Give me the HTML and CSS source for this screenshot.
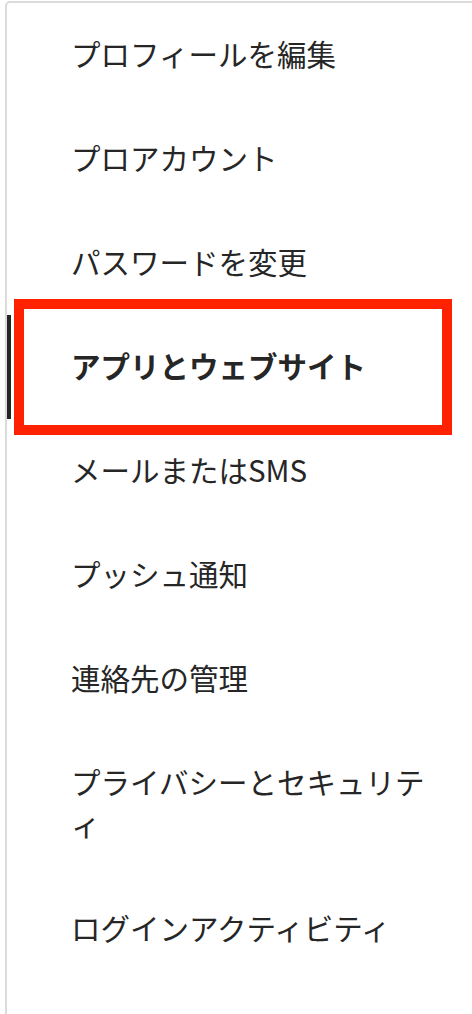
FILE: index.html
```html
<!DOCTYPE html>
<html lang="ja">
<head>
<meta charset="utf-8">
<link rel="stylesheet" href="styles.css">
</head>
<body>
<nav class="panel">
  <ul class="menu">
    <li class="item">プロフィールを編集</li>
    <li class="item">プロアカウント</li>
    <li class="item">パスワードを変更</li>
    <li class="item active">アプリとウェブサイト<span class="highlight"></span></li>
    <li class="item">メールまたはSMS</li>
    <li class="item">プッシュ通知</li>
    <li class="item">連絡先の管理</li>
    <li class="item">プライバシーとセキュリティ</li>
    <li class="item">ログインアクティビティ</li>
  </ul>
</nav>
</body>
</html>
```

FILE: styles.css
```css
html, body {
  margin: 0;
  padding: 0;
  background: #ffffff;
  overflow: hidden;
}

.panel {
  margin: 1px 0 0 5px;
  width: 490px;
  height: 1040px;
  border: 2px solid #dbdbdb;
  border-radius: 5px;
  box-sizing: border-box;
  background: #ffffff;
}

.menu {
  list-style: none;
  margin: 0;
  padding: 0;
}

.item {
  position: relative;
  padding: 29px 46px 33px 60px;
  font-family: "Noto Sans CJK JP", "Noto Sans", sans-serif;
  font-size: 29.5px;
  line-height: 42px;
  color: #262626;
  line-break: loose;
  border-left: 4px solid transparent;
}

.item.active {
  font-weight: 700;
  border-left-color: #262626;
}

.highlight {
  position: absolute;
  top: -16px;
  bottom: -16px;
  left: 3px;
  width: 438px;
  border: 10px solid #ff2200;
  box-sizing: border-box;
  pointer-events: none;
}
```
